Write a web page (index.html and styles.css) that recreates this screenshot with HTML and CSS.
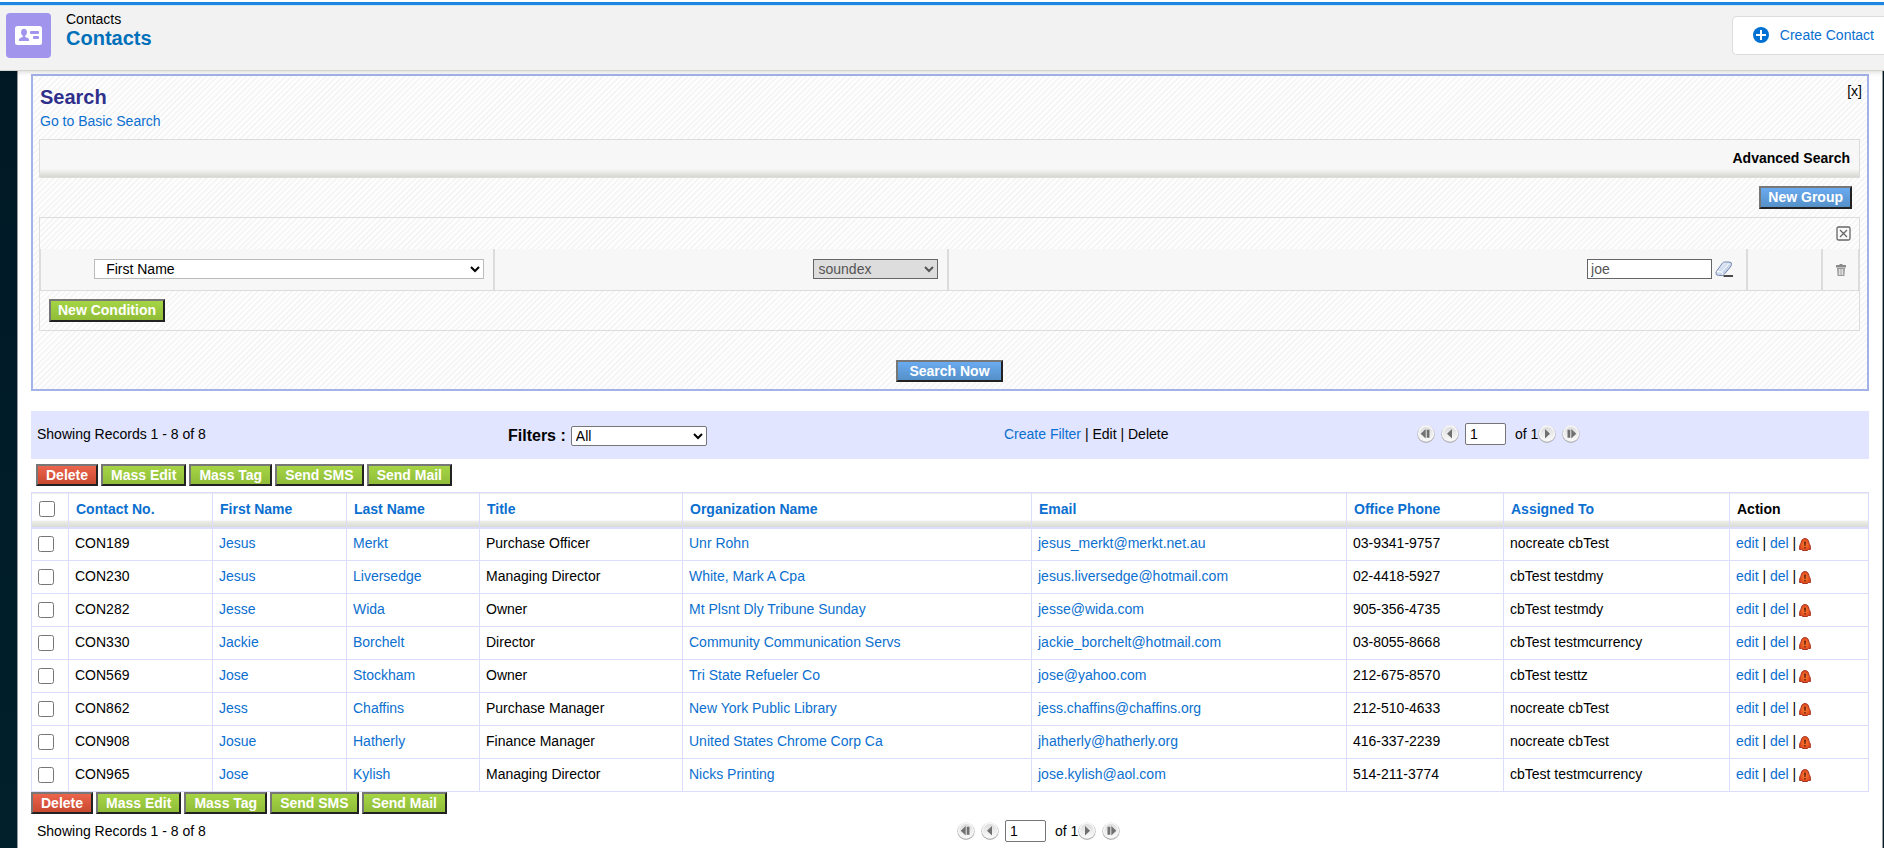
FILE: index.html
```
<!DOCTYPE html>
<html lang="en">
<head>
<meta charset="utf-8">
<title>Contacts</title>
<link rel="stylesheet" href="styles.css">
</head>
<body>
<svg class="defs" width="0" height="0" aria-hidden="true">
<defs>
<linearGradient id="disc" x1="0" y1="0" x2="0" y2="1"><stop offset="0" stop-color="#dcdcdc"/><stop offset="1" stop-color="#fafafa"/></linearGradient>
<linearGradient id="rub" x1="0" y1="0" x2="1" y2="1"><stop offset="0" stop-color="#f4f8ff"/><stop offset="1" stop-color="#a9bddd"/></linearGradient>
<radialGradient id="bellfill"><stop offset="0" stop-color="#ff7a2e"/><stop offset="1" stop-color="#dc4a20"/></radialGradient>
<symbol id="base" viewBox="0 0 18 18"><circle cx="9" cy="9.200" r="8.700" fill="#b4b4b8"/><circle cx="9" cy="8.500" r="8.200" fill="#f6f6f6"/><circle cx="9" cy="8.700" r="6.800" fill="url(#disc)"/></symbol>
<symbol id="prev" viewBox="0 0 18 18"><use href="#base"/><path d="M11 4v9.500L6 8.700z" fill="#707070"/></symbol>
<symbol id="next" viewBox="0 0 18 18"><use href="#base"/><path d="M7 4v9.500l5-4.800z" fill="#707070"/></symbol>
<symbol id="first" viewBox="0 0 18 18"><use href="#base"/><path d="M8.700 4v9.500L3.700 8.700zM9.700 4.800h2.800v8H9.700z" fill="#707070"/></symbol>
<symbol id="last" viewBox="0 0 18 18"><use href="#base"/><path d="M9.300 4v9.500l5-4.800zM5.500 4.800h2.800v8H5.500z" fill="#707070"/></symbol>
<symbol id="bell" viewBox="0 0 12 13"><path d="M6 .6C3.600.6 2.600 2.200 2.200 4.200 1.900 5.800.6 7.200.6 9.200v2.300h1.900l1.200 1h4.600l1.200-1h1.900V9.200c0-2-1.300-3.400-1.600-5C9.400 2.200 8.400.6 6 .6z" fill="url(#bellfill)" stroke="#a83220"/><path d="M5.200 3.800h1.600l-.3 4.200h-1zM5.400 9h1.200v1.500H5.400z" fill="#4a1408"/></symbol>
</defs>
</svg>

<header class="topbar">
  <div class="module-icon">
    <svg viewBox="0 0 27 19" width="27" height="19"><rect width="27" height="19" rx="2.500" fill="#fff"/><g fill="#a094ed"><ellipse cx="9" cy="6.200" rx="2.900" ry="3.500"/><path d="M7.800 8h2.400v3c1.800.6 4 1.300 4 3.200 0 .6-.4.900-1 .9H4.800c-.6 0-1-.3-1-.9 0-1.900 2.200-2.600 4-3.200z"/><rect x="15" y="5" width="9" height="3" rx="1"/><rect x="18" y="10" width="6" height="3" rx="1"/></g></svg>
  </div>
  <div class="module-name">
    <span>Contacts</span>
    <h1>Contacts</h1>
  </div>
  <button class="create" type="button">
    <svg viewBox="0 0 16 16" width="16" height="16"><circle cx="8" cy="8" r="8" fill="#0070d2"/><path d="M8 3v10M3 8h10" stroke="#fff" stroke-width="2"/></svg>
    Create Contact
  </button>
</header>

<main class="page">
  <form class="search">
    <div class="search-head">
      <div>
        <h2>Search</h2>
        <a href="#">Go to Basic Search</a>
      </div>
      <span>[x]</span>
    </div>
    <div class="advanced">Advanced Search</div>
    <div class="group-tools"><button class="btn blue" type="button">New Group</button></div>
    <section class="group">
      <div class="group-close">
        <svg viewBox="0 0 15 15" width="15" height="15"><rect x="1" y="1" width="13" height="13" rx="1.500" fill="#fafafa" stroke="#666" stroke-width="1.300"/><path d="M4 4l7 7M11 4l-7 7" stroke="#666" stroke-width="1.300"/></svg>
      </div>
      <div class="condition">
        <div class="cell"><select class="field-select" aria-label="Field"><option>First Name</option></select></div>
        <div class="cell"><select class="op-select" aria-label="Operator" disabled><option>soundex</option></select></div>
        <div class="cell">
          <input class="value" type="text" value="joe" aria-label="Value">
          <svg viewBox="0 0 18 16" width="18" height="16"><path d="M9.500 1h4.500q3 0 2.500 2.500-.3 1.500-1.500 3L9 13.500q-.8 1-2 1H3.500q-3-.2-2.500-3 .2-1 1-2L7.500 2q.8-1 2-1z" fill="url(#rub)" stroke="#7588ae"/><path d="M2 10.500l4 .5q2 .5 2 3M6.500 11L14 2.500" fill="none" stroke="#fff"/><path d="M8.500 15H18" stroke="#111" stroke-width="1.500"/></svg>
        </div>
        <div class="cell"></div>
        <div class="cell trash">
          <svg viewBox="0 0 10 12" width="10" height="12"><path d="M3.500 0h3v1H10v2.500H0V1h3.500z" fill="#8a8a8a"/><path d="M1 4h8l-.6 8H1.600z" fill="#999"/><path d="M3.300 5v6M5 5v6M6.700 5v6" stroke="#eee" stroke-width="1"/></svg>
        </div>
      </div>
      <div class="group-foot"><button class="btn green" type="button">New Condition</button></div>
    </section>
    <div class="search-foot"><button class="btn blue wide" type="button">Search Now</button></div>
  </form>

  <div class="filterbar">
    <span class="records">Showing Records 1 - 8 of 8</span>
    <div class="filter"><label for="filter">Filters :</label><select id="filter"><option>All</option></select></div>
    <div class="filter-links"><a href="#">Create Filter</a> | Edit | Delete</div>
    <div class="pager">
      <svg width="18" height="18"><use href="#first"/></svg>
      <svg width="18" height="18"><use href="#prev"/></svg>
      <input type="text" value="1" aria-label="Page">
      <span>of 1</span>
      <svg width="18" height="18"><use href="#next"/></svg>
      <svg width="18" height="18"><use href="#last"/></svg>
    </div>
  </div>

  <div class="actions">
    <button class="btn red" type="button">Delete</button>
    <button class="btn green" type="button">Mass Edit</button>
    <button class="btn green" type="button">Mass Tag</button>
    <button class="btn green" type="button">Send SMS</button>
    <button class="btn green" type="button">Send Mail</button>
  </div>

  <table class="list">
    <colgroup><col class="c0"><col class="c1"><col class="c2"><col class="c3"><col class="c4"><col class="c5"><col class="c6"><col class="c7"><col class="c8"><col class="c9"></colgroup>
    <thead><tr><th><input type="checkbox" aria-label="Select all"></th><th><a href="#">Contact No.</a></th><th><a href="#">First Name</a></th><th><a href="#">Last Name</a></th><th><a href="#">Title</a></th><th><a href="#">Organization Name</a></th><th><a href="#">Email</a></th><th><a href="#">Office Phone</a></th><th><a href="#">Assigned To</a></th><th>Action</th></tr></thead>
    <tbody>
      <tr><td><input type="checkbox" aria-label="Select CON189"></td><td>CON189</td><td><a href="#">Jesus</a></td><td><a href="#">Merkt</a></td><td>Purchase Officer</td><td><a href="#">Unr Rohn</a></td><td><a href="#">jesus_merkt@merkt.net.au</a></td><td>03-9341-9757</td><td>nocreate cbTest</td><td><a href="#">edit</a> | <a href="#">del</a> | <svg width="12" height="13"><use href="#bell"/></svg></td></tr>
      <tr><td><input type="checkbox" aria-label="Select CON230"></td><td>CON230</td><td><a href="#">Jesus</a></td><td><a href="#">Liversedge</a></td><td>Managing Director</td><td><a href="#">White, Mark A Cpa</a></td><td><a href="#">jesus.liversedge@hotmail.com</a></td><td>02-4418-5927</td><td>cbTest testdmy</td><td><a href="#">edit</a> | <a href="#">del</a> | <svg width="12" height="13"><use href="#bell"/></svg></td></tr>
      <tr><td><input type="checkbox" aria-label="Select CON282"></td><td>CON282</td><td><a href="#">Jesse</a></td><td><a href="#">Wida</a></td><td>Owner</td><td><a href="#">Mt Plsnt Dly Tribune Sunday</a></td><td><a href="#">jesse@wida.com</a></td><td>905-356-4735</td><td>cbTest testmdy</td><td><a href="#">edit</a> | <a href="#">del</a> | <svg width="12" height="13"><use href="#bell"/></svg></td></tr>
      <tr><td><input type="checkbox" aria-label="Select CON330"></td><td>CON330</td><td><a href="#">Jackie</a></td><td><a href="#">Borchelt</a></td><td>Director</td><td><a href="#">Community Communication Servs</a></td><td><a href="#">jackie_borchelt@hotmail.com</a></td><td>03-8055-8668</td><td>cbTest testmcurrency</td><td><a href="#">edit</a> | <a href="#">del</a> | <svg width="12" height="13"><use href="#bell"/></svg></td></tr>
      <tr><td><input type="checkbox" aria-label="Select CON569"></td><td>CON569</td><td><a href="#">Jose</a></td><td><a href="#">Stockham</a></td><td>Owner</td><td><a href="#">Tri State Refueler Co</a></td><td><a href="#">jose@yahoo.com</a></td><td>212-675-8570</td><td>cbTest testtz</td><td><a href="#">edit</a> | <a href="#">del</a> | <svg width="12" height="13"><use href="#bell"/></svg></td></tr>
      <tr><td><input type="checkbox" aria-label="Select CON862"></td><td>CON862</td><td><a href="#">Jess</a></td><td><a href="#">Chaffins</a></td><td>Purchase Manager</td><td><a href="#">New York Public Library</a></td><td><a href="#">jess.chaffins@chaffins.org</a></td><td>212-510-4633</td><td>nocreate cbTest</td><td><a href="#">edit</a> | <a href="#">del</a> | <svg width="12" height="13"><use href="#bell"/></svg></td></tr>
      <tr><td><input type="checkbox" aria-label="Select CON908"></td><td>CON908</td><td><a href="#">Josue</a></td><td><a href="#">Hatherly</a></td><td>Finance Manager</td><td><a href="#">United States Chrome Corp Ca</a></td><td><a href="#">jhatherly@hatherly.org</a></td><td>416-337-2239</td><td>nocreate cbTest</td><td><a href="#">edit</a> | <a href="#">del</a> | <svg width="12" height="13"><use href="#bell"/></svg></td></tr>
      <tr><td><input type="checkbox" aria-label="Select CON965"></td><td>CON965</td><td><a href="#">Jose</a></td><td><a href="#">Kylish</a></td><td>Managing Director</td><td><a href="#">Nicks Printing</a></td><td><a href="#">jose.kylish@aol.com</a></td><td>514-211-3774</td><td>cbTest testmcurrency</td><td><a href="#">edit</a> | <a href="#">del</a> | <svg width="12" height="13"><use href="#bell"/></svg></td></tr>
    </tbody>
  </table>

  <div class="actions bottom">
    <button class="btn red" type="button">Delete</button>
    <button class="btn green" type="button">Mass Edit</button>
    <button class="btn green" type="button">Mass Tag</button>
    <button class="btn green" type="button">Send SMS</button>
    <button class="btn green" type="button">Send Mail</button>
  </div>
  <div class="bottombar">
    <span class="records">Showing Records 1 - 8 of 8</span>
    <div class="pager">
      <svg width="18" height="18"><use href="#first"/></svg>
      <svg width="18" height="18"><use href="#prev"/></svg>
      <input type="text" value="1" aria-label="Page">
      <span>of 1</span>
      <svg width="18" height="18"><use href="#next"/></svg>
      <svg width="18" height="18"><use href="#last"/></svg>
    </div>
  </div>
</main>
</body>
</html>
```
FILE: styles.css
```
* { box-sizing: border-box; }
html { min-height: 100%; background: linear-gradient(180deg, #001824, #00202c); overflow: hidden; }
body { margin: 0; font: 14px/20px "Liberation Sans", Arial, sans-serif; color: #000; }
a { color: #0b6fd0; text-decoration: none; }
h1, h2 { margin: 0; }
button, input, select { font: inherit; margin: 0; }
.defs { display: block; height: 0; }

.topbar { display: flex; align-items: flex-start; height: 71px; padding-left: 6px; background: linear-gradient(#fff 2px, #1d86e0 2px, #1d86e0 5px, #b5d8f5 5px, #f2f2f2 6px); border-bottom: 1px solid #d4d4ce; box-shadow: 0 2px 4px rgba(0, 0, 0, .12); position: relative; }
.module-icon { display: flex; align-items: center; justify-content: center; width: 45px; height: 45px; margin: 13px 15px 0 0; border-radius: 4px; background: #a094ed; }
.module-name { padding-top: 9px; }
.module-name span { display: block; line-height: 20px; }
.module-name h1 { font-size: 20px; line-height: 18px; color: #0070ba; }
.create { display: flex; align-items: center; gap: 11px; height: 39px; margin: 16px 0 0 auto; padding: 0 10px 2px 20px; background: #fff; color: #0b6fd0; border: 1px solid #dcdcdc; border-right: 0; border-radius: 5px 0 0 5px; }

.page { margin: 0 1px 0 17px; padding: 3px 13px 8px; background: #fff; border-left: 1px solid #999; border-right: 1px solid #999; }
.search { padding: 0 7px 7px 6px; border: 2px solid #a4b2e8; background: repeating-linear-gradient(135deg, #fefefe 0 2px, #f6f6f6 2px 4px); }
.search-head { display: flex; justify-content: space-between; height: 63px; margin-right: -2px; padding: 5px 0 0 1px; }
.search-head h2 { font-size: 20px; line-height: 32px; color: #30308c; }
.search-head a { display: block; line-height: 16px; }
.advanced { height: 39px; padding: 0 9px; text-align: right; font-weight: bold; line-height: 36px; border: 1px solid #dcdcdc; background: linear-gradient(0deg, #d6d7d0, #f7f7f7 8px); }
.group-tools { display: flex; justify-content: flex-end; padding: 8px 8px; }
.group { border: 1px solid #dcdcdc; }
.group-close { display: flex; justify-content: flex-end; height: 31px; padding: 8px 8px 0 0; }
.condition { display: grid; grid-template-columns: 454fr 454fr 800fr 75fr 36fr; height: 42px; background: #f7f7f7; border-bottom: 1px solid #dcdcdc; border-left: 1px solid #dcdcdc; }
.cell { display: flex; align-items: center; justify-content: flex-end; gap: 3px; padding: 0 9px 2px 0; border-right: 2px solid #dcdcdc; }
.cell:nth-child(3) { padding-right: 13px; }
.cell.trash { justify-content: center; padding: 0; border-right-width: 1px; }
.field-select, .op-select, .value { height: 20px; border: 1px solid #bbb; border-radius: 0; background-color: #fff; padding: 0 0 0 7px; }
.field-select { width: 88%; }
.op-select { width: 125px; padding-left: 1px; border-color: #666; background-color: #ddd; color: #555; opacity: 1; }
.value { width: 125px; padding: 0 3px; border-color: #666; color: #555; }
.group-foot { padding: 8px 9px; }
.search-foot { display: flex; justify-content: center; padding-top: 29px; }

.btn { display: block; height: 23px; padding: 0 7px 1px; border: 2px solid; border-color: #777 #222 #222 #777; border-radius: 0; font-weight: bold; line-height: 18px; color: #fff; }
.blue { background: linear-gradient(#6aaaf0, #5590c8); }
.green { background: linear-gradient(#a5d545, #90bc38); }
.red { background: linear-gradient(#ec644c, #c84830); }
.search-foot .btn { height: 22px; }
.wide { padding: 0 11px 1px; }

.filterbar { display: grid; grid-template-columns: 477fr 496fr 413fr 452fr; align-items: center; height: 48px; margin-top: 20px; background: #e1e5ff; }
.records { padding-left: 6px; }
.filterbar .records, .filter-links, .filterbar .pager { padding-bottom: 3px; }
.filter { display: flex; align-items: center; gap: 5px; padding-top: 2px; }
.filter label { font-size: 16px; font-weight: bold; }
.filter select { width: 136px; height: 20px; padding: 0; background: #fff; border: 1px solid #767676; border-radius: 2px; }
.pager { display: flex; align-items: center; gap: 6px; }
.pager input { width: 41px; height: 22px; padding: 0 4px; border: 1px solid #767676; border-radius: 2px; }
.pager span { margin: 0 -6px 0 3px; }

.actions { display: flex; gap: 3px; padding: 5px 5px 6px; }
.actions .btn { height: 22px; padding: 0 8px 1px; }
.actions.bottom { padding: 0; }

.list { width: 100%; table-layout: fixed; border-collapse: collapse; }
.list th, .list td { height: 33px; padding: 0 0 0 6px; text-align: left; border: 1px solid #dcdcff; white-space: nowrap; }
.list th { height: 35px; padding: 0 0 1px 7px; border-bottom: 2px solid #dcdcff; background: linear-gradient(0deg, #d8d9d2, #f0f0ec 7px, #fff 7px); }
.list td { padding-bottom: 2px; }
.list input { display: block; width: 16px; height: 16px; }
.list td input { margin-top: 2px; }
.list svg { margin-left: -1px; vertical-align: -3px; }
.c0 { width: 37px; }
.c1 { width: 144px; }
.c2 { width: 134px; }
.c3 { width: 133px; }
.c4 { width: 203px; }
.c5 { width: 19%; }
.c6 { width: 315px; }
.c7 { width: 157px; }
.c8 { width: 226px; }
.c9 { width: 139px; }
.bottombar { display: grid; grid-template-columns: 926fr 912fr; align-items: center; height: 34px; }
```
